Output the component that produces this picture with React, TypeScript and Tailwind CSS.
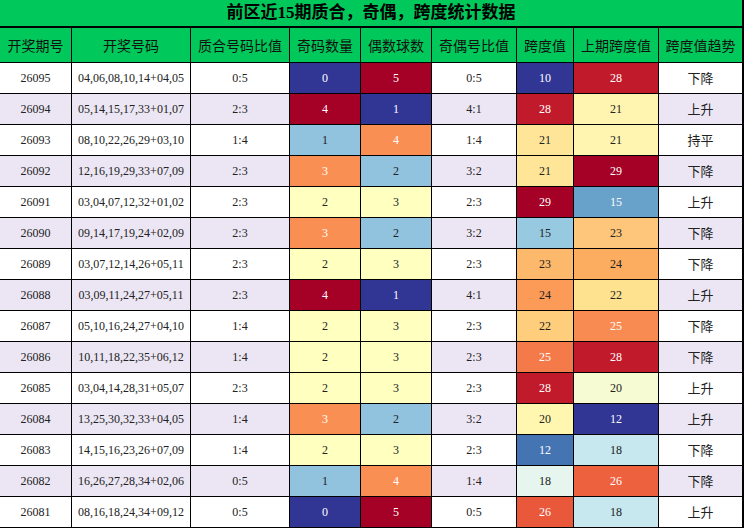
const FONT = "font-['Liberation_Serif','Noto_Sans_CJK_SC',serif]";
const CJK = "font-['Noto_Sans_CJK_SC','Noto_Sans',sans-serif]";

const headers = ["开奖期号", "开奖号码", "质合号码比值", "奇码数量", "偶数球数", "奇偶号比值", "跨度值", "上期跨度值", "跨度值趋势"];

const DB = "bg-[#313695] text-white";
const DR = "bg-[#a50026] text-white";
const R = "bg-[#c11b2b] text-white";
const LB = "bg-[#91c3de] text-[#222]";
const Y = "bg-[#ffffc0] text-[#222]";
const OR = "bg-[#fa8f53] text-white";

// odd: 0 DB, 1 LB, 2 Y, 3 OR, 4 DR ; even: 1 DB, 2 LB, 3 Y, 4 OR, 5 DR
const odd: Record<number, string> = { 0: DB, 1: LB, 2: Y, 3: OR, 4: DR };
const even: Record<number, string> = { 1: DB, 2: LB, 3: Y, 4: OR, 5: DR };

const span: Record<number, string> = {
  10: DB,
  12: "bg-[#4574b3] text-white",
  15: "bg-[#97c9e0] text-[#222]",
  18: "bg-[#e6f5ee] text-[#222]",
  20: "bg-[#fff6b0] text-[#222]",
  21: "bg-[#fee598] text-[#222]",
  22: "bg-[#fece7c] text-[#222]",
  23: "bg-[#fdb96b] text-[#222]",
  24: "bg-[#fc9a58] text-[#222]",
  25: "bg-[#f57a4a] text-white",
  26: "bg-[#e9583b] text-white",
  28: R,
  29: DR,
};

const prev: Record<number, string> = {
  12: DB,
  15: "bg-[#68a1c9] text-white",
  18: "bg-[#c8e8f0] text-[#222]",
  20: "bg-[#f6fbd3] text-[#222]",
  21: "bg-[#fff4b0] text-[#222]",
  22: "bg-[#fee290] text-[#222]",
  23: "bg-[#fdc67a] text-[#222]",
  24: "bg-[#fdad60] text-[#222]",
  25: "bg-[#f88b52] text-white",
  26: "bg-[#ee613f] text-white",
  28: R,
  29: DR,
};

const rows: [string, string, string, number, number, string, number, number, string][] = [
  ["26095", "04,06,08,10,14+04,05", "0:5", 0, 5, "0:5", 10, 28, "下降"],
  ["26094", "05,14,15,17,33+01,07", "2:3", 4, 1, "4:1", 28, 21, "上升"],
  ["26093", "08,10,22,26,29+03,10", "1:4", 1, 4, "1:4", 21, 21, "持平"],
  ["26092", "12,16,19,29,33+07,09", "2:3", 3, 2, "3:2", 21, 29, "下降"],
  ["26091", "03,04,07,12,32+01,02", "2:3", 2, 3, "2:3", 29, 15, "上升"],
  ["26090", "09,14,17,19,24+02,09", "2:3", 3, 2, "3:2", 15, 23, "下降"],
  ["26089", "03,07,12,14,26+05,11", "2:3", 2, 3, "2:3", 23, 24, "下降"],
  ["26088", "03,09,11,24,27+05,11", "2:3", 4, 1, "4:1", 24, 22, "上升"],
  ["26087", "05,10,16,24,27+04,10", "1:4", 2, 3, "2:3", 22, 25, "下降"],
  ["26086", "10,11,18,22,35+06,12", "1:4", 2, 3, "2:3", 25, 28, "下降"],
  ["26085", "03,04,14,28,31+05,07", "2:3", 2, 3, "2:3", 28, 20, "上升"],
  ["26084", "13,25,30,32,33+04,05", "1:4", 3, 2, "3:2", 20, 12, "上升"],
  ["26083", "14,15,16,23,26+07,09", "1:4", 2, 3, "2:3", 12, 18, "下降"],
  ["26082", "16,26,27,28,34+02,06", "0:5", 1, 4, "1:4", 18, 26, "下降"],
  ["26081", "08,16,18,24,34+09,12", "0:5", 0, 5, "0:5", 26, 18, "上升"],
];

function Cell({ children, className }: { children: React.ReactNode; className: string }) {
  return <div className={`h-[30px] flex items-center justify-center text-[12px] ${className}`}>{children}</div>;
}

export default function App() {
  return (
    <div className={`w-[744px] h-[528px] bg-black grid grid-cols-[71px_118px_98px_70px_70px_84px_56px_84px_83px] gap-px pr-[2px] pb-px content-start ${FONT}`}>
      <div className="col-span-9 h-[26px] mb-px bg-[#00c85a] flex items-center justify-center text-[17px] font-bold text-black">
        前区近15期质合，奇偶，跨度统计数据
      </div>
      {headers.map((h) => (
        <div key={h} className={`h-[34px] bg-[#00c85a] flex items-center justify-center text-[14px] text-[#111] ${CJK}`}>
          {h}
        </div>
      ))}
      {rows.map((r, i) => {
        const base = i % 2 === 0 ? "bg-white text-[#222]" : "bg-[#ece6f4] text-[#222]";
        return (
          <div key={r[0]} className="contents">
            <Cell className={base}>{r[0]}</Cell>
            <Cell className={base}>{r[1]}</Cell>
            <Cell className={base}>{r[2]}</Cell>
            <Cell className={odd[r[3]]}>{r[3]}</Cell>
            <Cell className={even[r[4]]}>{r[4]}</Cell>
            <Cell className={base}>{r[5]}</Cell>
            <Cell className={span[r[6]]}>{r[6]}</Cell>
            <Cell className={prev[r[7]]}>{r[7]}</Cell>
            <Cell className={`${base} ${CJK} text-[13px]`}>{r[8]}</Cell>
          </div>
        );
      })}
    </div>
  );
}
